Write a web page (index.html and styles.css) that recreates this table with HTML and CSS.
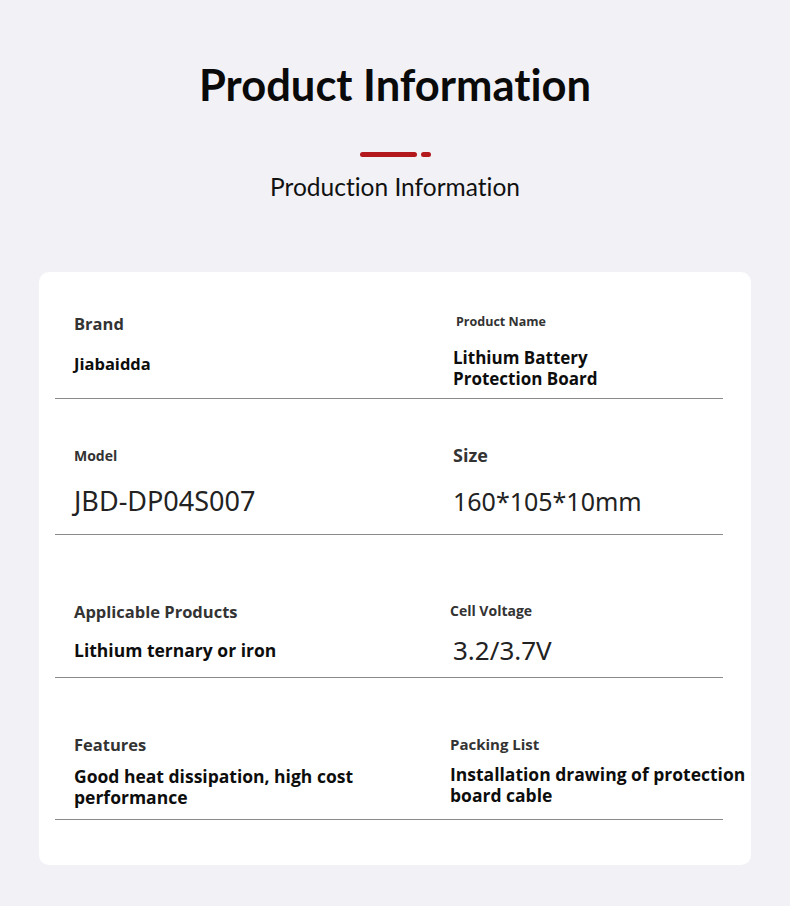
FILE: index.html
```html
<!DOCTYPE html>
<html lang="en">
<head>
<meta charset="utf-8">
<title>Product Information</title>
<link rel="stylesheet" href="styles.css">
</head>
<body>
	<div class="header">
		<h1 class="title">Product Information</h1>
		<div class="accent"><span class="dash"></span><span class="dot"></span></div>
		<h2 class="subtitle">Production Information</h2>
	</div>

	<div class="card">
		<div class="row row-1">
			<div class="cell cell-left">
				<div class="label label-md">Brand</div>
				<div class="value value-sm brand-value">Jiabaidda</div>
			</div>
			<div class="cell cell-right">
				<div class="label label-xs">Product Name</div>
				<div class="value value-md name-value">Lithium Battery<br>Protection Board</div>
			</div>
		</div>

		<div class="row row-2">
			<div class="cell cell-left">
				<div class="label label-sm">Model</div>
				<div class="value value-light model-value">JBD-DP04S007</div>
			</div>
			<div class="cell cell-right">
				<div class="label label-lg">Size</div>
				<div class="value value-light size-value">160*105*10mm</div>
			</div>
		</div>

		<div class="row row-3">
			<div class="cell cell-left">
				<div class="label label-md">Applicable Products</div>
				<div class="value value-lg">Lithium ternary or iron</div>
			</div>
			<div class="cell cell-right">
				<div class="label label-sm">Cell Voltage</div>
				<div class="value value-light voltage-value">3.2/3.7V</div>
			</div>
		</div>

		<div class="row row-4">
			<div class="cell cell-left">
				<div class="label label-md">Features</div>
				<div class="value value-lg">Good heat dissipation, high cost<br>performance</div>
			</div>
			<div class="cell cell-right">
				<div class="label label-pack">Packing List</div>
				<div class="value value-lg">Installation drawing of protection<br>board cable</div>
			</div>
		</div>
	</div>
</body>
</html>
```

FILE: styles.css
```css
* {
	box-sizing: border-box;
}

body {
	margin: 0;
	background: #f2f1f6;
	font-family: "Open Sans", "Liberation Sans", sans-serif;
	color: #111;
}

.header {
	padding-top: 56px;
	text-align: center;
}

.title {
	margin: 0;
	font-family: Lato, "Open Sans", sans-serif;
	font-size: 43.5px;
	font-weight: 700;
	line-height: 56px;
	font-variant-ligatures: none;
	color: #0a0a0a;
}

.accent {
	display: flex;
	justify-content: center;
	gap: 4px;
	margin-top: 40px;
}

.dash {
	width: 57px;
	height: 5px;
	border-radius: 3px;
	background: #b3191c;
}

.dot {
	width: 10px;
	height: 5px;
	border-radius: 3px;
	background: #b3191c;
}

.subtitle {
	margin: 14px 0 0;
	font-family: Lato, "Open Sans", sans-serif;
	font-size: 24.5px;
	font-weight: 400;
	line-height: 32px;
	font-variant-ligatures: none;
	color: #111;
}

.card {
	margin: 69px 39px 0;
	padding: 0 28px 45px 16px;
	background: #fff;
	border-radius: 10px;
}

.row {
	display: grid;
	grid-template-columns: 395px 1fr;
	border-bottom: 1px solid #8a8a8a;
}

.cell-left {
	padding-left: 19px;
}

.cell-right {
	white-space: nowrap;
}

.row-1 { height: 127px; padding-top: 41px; }
.row-2 { height: 136px; padding-top: 47px; }
.row-3 { height: 143px; padding-top: 66px; }
.row-4 { height: 142px; padding-top: 56px; }

.label {
	font-weight: 700;
	color: #333;
}

.label-xs { font-size: 12.5px; line-height: 18px; margin-left: 6px; }
.label-sm { font-size: 14px; line-height: 20px; }
.label-md { font-size: 16.5px; line-height: 22px; }
.label-lg { font-size: 18px; line-height: 18px; margin-left: 3px; }
.label-pack { font-size: 15px; line-height: 20px; }

.value {
	font-weight: 700;
	color: #0d0d0d;
	margin-top: 17px;
}

.value-sm { font-size: 16.5px; line-height: 21px; }
.value-md { font-size: 17px; line-height: 21px; }
.value-lg { font-size: 17.5px; line-height: 21px; }

.row-4 .value { margin-top: 10px; }

.brand-value { margin-top: 18px; }
.name-value { margin-top: 16px; margin-left: 3px; }

.value-light {
	font-family: "Noto Sans", "Open Sans", sans-serif;
	font-weight: 400;
	font-size: 25px;
	line-height: 32px;
	color: #222;
}

.model-value { font-size: 27px; margin-top: 19px; }
.size-value { margin-top: 21px; margin-left: 3px; }
.voltage-value { font-size: 26px; margin-top: 13px; margin-left: 3px; }
```
